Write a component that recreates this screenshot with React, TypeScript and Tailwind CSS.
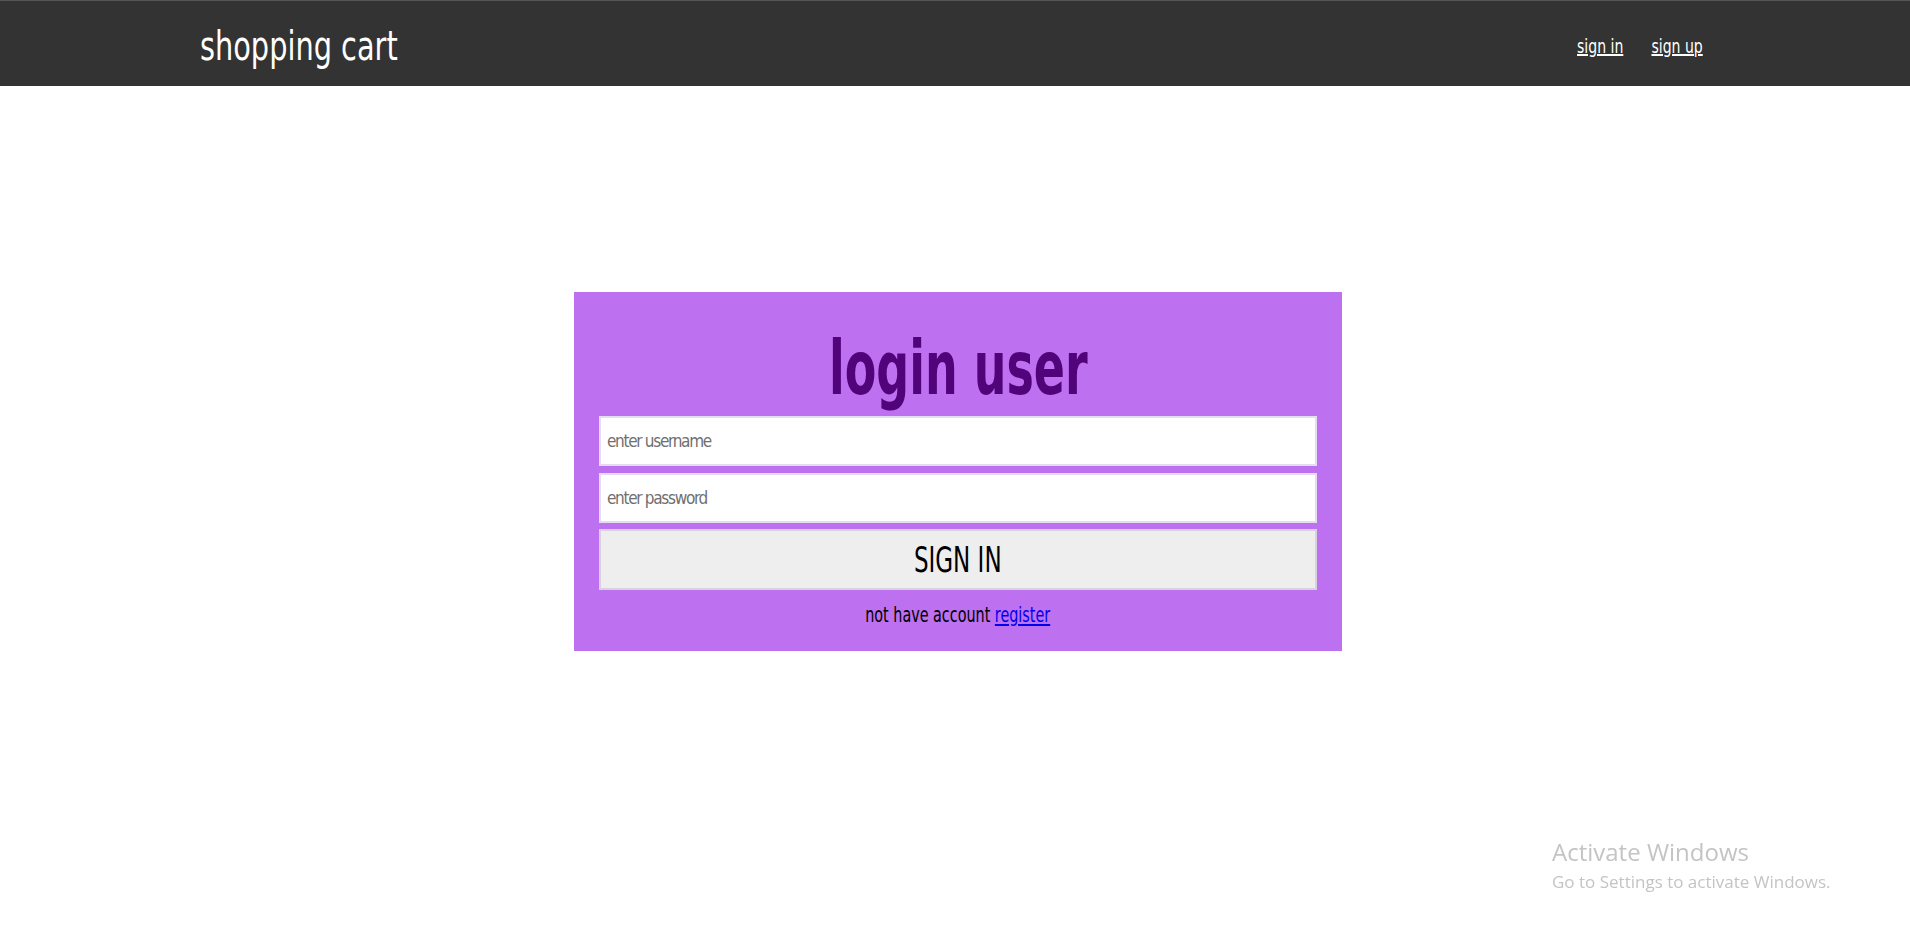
const condensed = "font-['DejaVu_Sans_Condensed','DejaVu_Sans',sans-serif]";

export default function App() {
  return (
    <div className={`min-h-screen bg-white ${condensed}`}>
      {/* Header */}
      <header className="h-[86px] bg-[#333333] border-t border-[#555555]">
        <div className="h-full px-[200px] pt-[5px] flex items-center justify-between">
          <h1 className="text-[40px] text-white leading-none">
            <span className="inline-block origin-left scale-x-[0.8]">shopping cart</span>
          </h1>
          <nav className="flex items-center gap-[14px] pr-[7px]">
            <a href="#" className="inline-block origin-right scale-x-[0.78] text-[20px] text-white underline">
              sign in
            </a>
            <a href="#" className="inline-block origin-right scale-x-[0.78] text-[20px] text-white underline">
              sign up
            </a>
          </nav>
        </div>
      </header>

      {/* Login card */}
      <main className="flex justify-center pt-[206px] pl-[6px]">
        <div className="w-[768px] h-[359px] bg-[#bd70f0] px-[25px] flex flex-col">
          <h2 className="h-[124px] flex items-end justify-center pb-[11px] text-[74px] font-bold text-[#51037a] leading-none">
            <span className="inline-block scale-x-[0.69]">login user</span>
          </h2>
          <input
            type="text"
            placeholder="enter username"
            className="h-[50px] w-full bg-white border-2 border-[#e4dcef] px-[6px] text-[17px] tracking-[-1.3px] text-black placeholder:text-[#6f6f6f] outline-none"
          />
          <input
            type="password"
            placeholder="enter password"
            className="mt-[7px] h-[50px] w-full bg-white border-2 border-[#e4dcef] px-[6px] text-[17px] tracking-[-1.3px] text-black placeholder:text-[#6f6f6f] outline-none"
          />
          <button className="mt-[6px] h-[61px] w-full bg-[#eeeeee] border-2 border-[#d8d2df] text-[36px] text-black leading-none">
            <span className="inline-block scale-x-[0.71]">SIGN IN</span>
          </button>
          <p className="mt-[10px] text-center text-[21px] text-black">
            <span className="inline-block scale-x-[0.76]">
              not have account{" "}
              <a href="#" className="text-[#0000ee] underline">
                register
              </a>
            </span>
          </p>
        </div>
      </main>

      {/* Windows watermark */}
      <div className="fixed left-[1552px] top-[837px] text-[#c4c4c4] font-['Open_Sans',sans-serif] pointer-events-none">
        <div className="text-[24px] leading-[30px]">Activate Windows</div>
        <div className="text-[17px] leading-[30px]">Go to Settings to activate Windows.</div>
      </div>
    </div>
  );
}
